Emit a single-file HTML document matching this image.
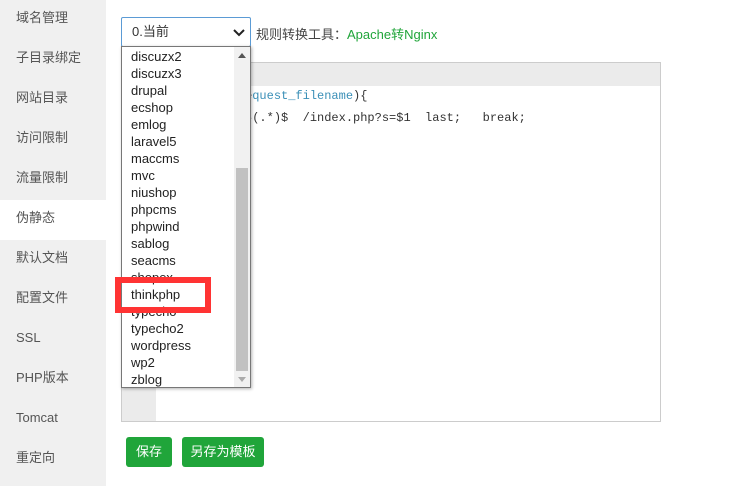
<!DOCTYPE html>
<html><head><meta charset="utf-8"><style>
*{margin:0;padding:0;box-sizing:border-box}
body{width:751px;height:486px;position:relative;background:#fff;font-family:"Liberation Sans","Noto Sans CJK SC",sans-serif;font-size:13px;color:#333;overflow:hidden}
.side{position:absolute;left:0;top:0;width:106px;height:486px;background:#f0f0f0}
.side div{height:40px;line-height:36px;padding-left:16px;font-size:13px;color:#555}
.side .on{background:#fff}
.sel{position:absolute;left:121px;top:17px;width:130px;height:30px;border:1px solid #5b9bd5;border-radius:2px;background:#fff;padding-left:10px;line-height:28px;font-size:13px}
.sel svg{position:absolute;right:5px;top:10px}
.lbl{position:absolute;left:256px;top:24px;font-size:13px;color:#444}
.lbl b{font-weight:normal;color:#20a53a}
.ed{position:absolute;left:121px;top:62px;width:540px;height:360px;border:1px solid #ccc;background:#fff}
.ed .hd{height:23px;background:#ebebeb}
.ed .gt{position:absolute;left:0;top:23px;width:34px;bottom:0;background:#ebebeb}
.code{position:absolute;font-family:"Liberation Mono",monospace;font-size:12px;color:#333;white-space:pre}
.dd{position:absolute;left:121px;top:46px;width:130px;height:342px;border:1px solid #777;background:#fff;box-shadow:1px 1px 3px rgba(0,0,0,.3)}
.dd .it{height:17px;line-height:17px;padding-left:9px;font-size:13px;color:#222}
.dd .sb{position:absolute;right:0;top:0;width:16px;height:340px;background:#f1f1f1}
.dd .th{position:absolute;left:2px;right:2px;top:121px;height:203px;background:#c1c1c1}
.btn{position:absolute;top:437px;height:30px;background:#20a53a;color:#fff;border-radius:3px;line-height:30px;text-align:center;font-size:13px}
.red{position:absolute;left:115px;top:277px;width:96px;height:36px;border:6px solid #f33}
</style></head><body>
<div class="side">
<div>域名管理</div><div>子目录绑定</div><div>网站目录</div><div>访问限制</div><div>流量限制</div><div class="on">伪静态</div><div>默认文档</div><div>配置文件</div><div>SSL</div><div>PHP版本</div><div>Tomcat</div><div>重定向</div>
</div>
<div class="ed"><div class="hd"></div><div class="gt"></div></div>
<div class="code" style="left:173px;top:89px">if (!-e $re<span style="color:#3a8fb7">quest_filename</span>){</div>
<div class="code" style="left:173px;top:111px">  rewrite ^(.*)$  /index.php?s=$1  last;   break;</div>
<div class="sel">0.当前<svg width="12" height="9" viewBox="0 0 12 9"><path d="M1 2l5 5 5-5" stroke="#222" stroke-width="2" fill="none"/></svg></div>
<div class="lbl">规则转换工具：<b>Apache转Nginx</b></div>
<div class="dd" style="padding-top:1px">
<div class="it">discuzx2</div><div class="it">discuzx3</div><div class="it">drupal</div><div class="it">ecshop</div><div class="it">emlog</div><div class="it">laravel5</div><div class="it">maccms</div><div class="it">mvc</div><div class="it">niushop</div><div class="it">phpcms</div><div class="it">phpwind</div><div class="it">sablog</div><div class="it">seacms</div><div class="it">shopex</div><div class="it">thinkphp</div><div class="it">typecho</div><div class="it">typecho2</div><div class="it">wordpress</div><div class="it">wp2</div><div class="it">zblog</div>
<div class="sb"><svg style="position:absolute;left:4px;top:6px" width="8" height="5"><path d="M0 5L4 0L8 5Z" fill="#555"/></svg><div class="th"></div><svg style="position:absolute;left:4px;top:330px" width="8" height="5"><path d="M0 0L4 5L8 0Z" fill="#aaa"/></svg></div>
</div>
<div class="red"></div>
<div class="btn" style="left:126px;width:46px">保存</div>
<div class="btn" style="left:182px;width:82px">另存为模板</div>
</body></html>
